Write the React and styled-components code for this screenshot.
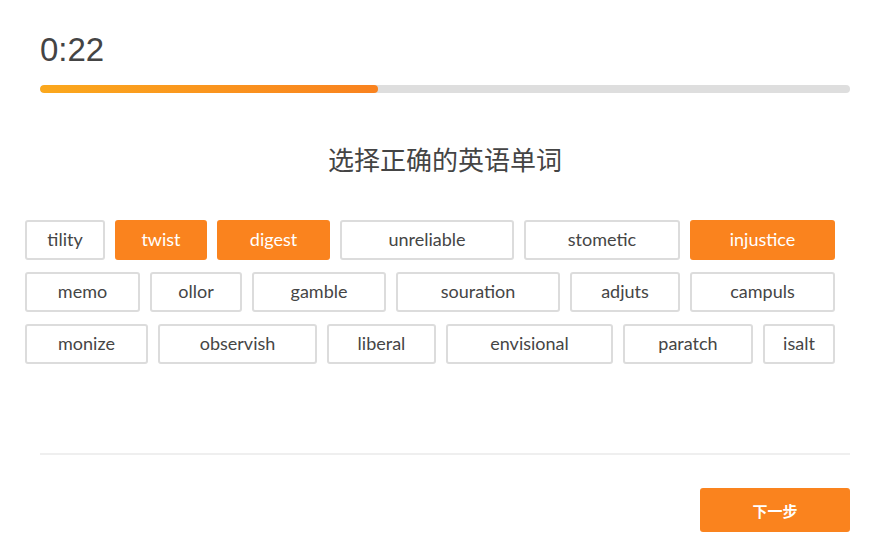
import React from "react";
import styled, { createGlobalStyle } from "styled-components";

const Global = createGlobalStyle`
  html, body { margin: 0; padding: 0; background: #fff; }
  body { font-family: Lato, "Noto Sans", sans-serif; }
`;

const Page = styled.div`
  width: 881px;
  height: 554px;
  box-sizing: border-box;
  padding: 30px 31px 0 40px;
  display: flex;
  flex-direction: column;
`;

const Timer = styled.div`
  font-family: "Liberation Sans", Arial, sans-serif;
  font-size: 33px;
  line-height: 40px;
  color: #444;
  height: 40px;
`;

const Track = styled.div`
  margin-top: 15px;
  width: 810px;
  height: 8px;
  border-radius: 4px;
  background: #dedede;
  overflow: hidden;
`;

const Fill = styled.div`
  height: 100%;
  border-radius: 4px;
  background: linear-gradient(90deg, #fba81d 0%, #f9821f 100%);
`;

const Title = styled.h1`
  margin: 48px 0 0;
  width: 810px;
  text-align: center;
  font-family: "Noto Sans CJK SC", "Noto Sans", sans-serif;
  font-weight: 400;
  font-size: 26px;
  line-height: 36px;
  height: 36px;
  color: #444;
`;

const Words = styled.div`
  margin: 43px 0 0 -15px;
  width: 810px;
  display: flex;
  flex-direction: column;
  gap: 12px;
`;

const Row = styled.div`
  display: flex;
  gap: 10px;
`;

const Word = styled.button`
  box-sizing: border-box;
  width: ${(p) => p.$w}px;
  height: 40px;
  padding: 0 0 2px;
  border: 2px solid ${(p) => (p.$on ? "#fa831e" : "#dcdcdc")};
  border-radius: 3px;
  background: ${(p) => (p.$on ? "#fa831e" : "#fff")};
  color: ${(p) => (p.$on ? "#fff" : "#454545")};
  font-family: Lato, "Noto Sans", sans-serif;
  font-size: 18px;
  line-height: 34px;
  text-align: center;
  cursor: pointer;
`;

const Divider = styled.div`
  margin-top: 89px;
  width: 810px;
  height: 2px;
  background: #efefef;
`;

const Footer = styled.div`
  width: 810px;
  margin-top: 33px;
  display: flex;
  justify-content: flex-end;
`;

const Next = styled.button`
  width: 150px;
  height: 44px;
  border: none;
  border-radius: 3px;
  background: #fa831e;
  color: #fff;
  font-family: "Noto Sans CJK SC", sans-serif;
  font-weight: 700;
  font-size: 15px;
  cursor: pointer;
`;

const rows = [
  [
    ["tility", 80],
    ["twist", 92, true],
    ["digest", 113, true],
    ["unreliable", 174],
    ["stometic", 156],
    ["injustice", 145, true],
  ],
  [
    ["memo", 115],
    ["ollor", 92],
    ["gamble", 134],
    ["souration", 164],
    ["adjuts", 110],
    ["campuls", 145],
  ],
  [
    ["monize", 123],
    ["observish", 159],
    ["liberal", 109],
    ["envisional", 167],
    ["paratch", 130],
    ["isalt", 72],
  ],
];

export default function App() {
  const progress = 338 / 810;
  return (
    <>
      <Global />
      <Page>
        <Timer>0:22</Timer>
        <Track>
          <Fill style={{ width: `${progress * 100}%` }} />
        </Track>
        <Title>选择正确的英语单词</Title>
        <Words>
          {rows.map((r, i) => (
            <Row key={i}>
              {r.map(([t, w, on]) => (
                <Word key={t} $w={w} $on={on}>
                  {t}
                </Word>
              ))}
            </Row>
          ))}
        </Words>
        <Divider />
        <Footer>
          <Next>下一步</Next>
        </Footer>
      </Page>
    </>
  );
}
